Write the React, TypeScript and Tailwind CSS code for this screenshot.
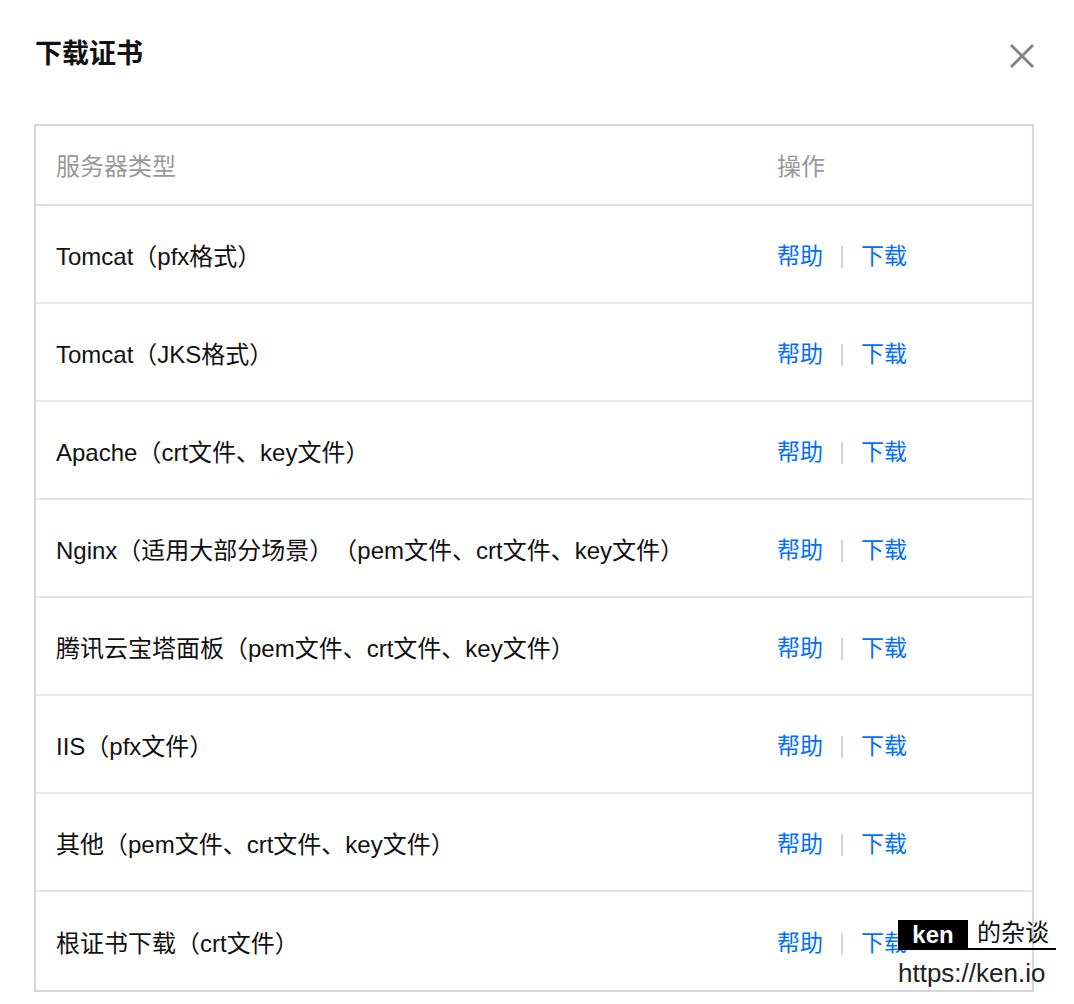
const rows = [
  "Tomcat（pfx格式）",
  "Tomcat（JKS格式）",
  "Apache（crt文件、key文件）",
  "Nginx（适用大部分场景）（pem文件、crt文件、key文件）",
  "腾讯云宝塔面板（pem文件、crt文件、key文件）",
  "IIS（pfx文件）",
  "其他（pem文件、crt文件、key文件）",
  "根证书下载（crt文件）",
];

const font = { fontFamily: '"Liberation Sans", "Noto Sans CJK SC", sans-serif' };

export default function App() {
  return (
    <div className="relative h-[1004px] w-[1074px] overflow-hidden bg-white [text-spacing-trim:space-all]" style={font}>
      <div className="flex items-start justify-between pl-[35px] pr-[38px] pt-[36px]">
        <h1 className="mt-[2px] text-[27px] font-bold leading-[32px] text-[#111]">下载证书</h1>
        <svg width="28" height="28" viewBox="0 0 28 28" className="mt-[6px]">
          <path d="M3 3 L25 25 M25 3 L3 25" stroke="#858585" strokeWidth="3" />
        </svg>
      </div>

      <div className="ml-[34px] mt-[54px] w-[1000px] border-2 border-[#d4d7e0]">
        <div className="flex h-[80px] items-center border-b-2 border-[#d9dbe3] pt-[3px] text-[24px] text-[#999]">
          <div className="w-[741px] pl-[20px]">服务器类型</div>
          <div>操作</div>
        </div>
        {rows.map((r, i) => (
          <div
            key={r}
            className={
              "flex h-[98px] items-center pt-[5px] text-[24px] text-[#111] " +
              (i < rows.length - 1 ? "border-b-2 border-[#e6e7ec]" : "")
            }
          >
            <div className="w-[741px] pl-[20px]">{r}</div>
            <div className="flex items-center text-[23px] text-[#006eff]">
              <span>帮助</span>
              <span className="mx-[18px] h-[22px] w-[2px] bg-[#d3d3d3]" />
              <span>下载</span>
            </div>
          </div>
        ))}
      </div>

      <div className="absolute left-[898px] top-[918px]">
        <div className="flex items-end">
          <div className="flex h-[30px] w-[70px] items-center justify-center bg-black text-[24px] font-bold leading-none text-white">
            ken
          </div>
          <div className="w-[88px] border-b-2 border-black pl-[9px] text-[24px] leading-[30px] text-[#111]">的杂谈</div>
        </div>
        <div className="mt-[8px] text-[26px] leading-[30px] text-[#222]">https://ken.io</div>
      </div>
    </div>
  );
}
